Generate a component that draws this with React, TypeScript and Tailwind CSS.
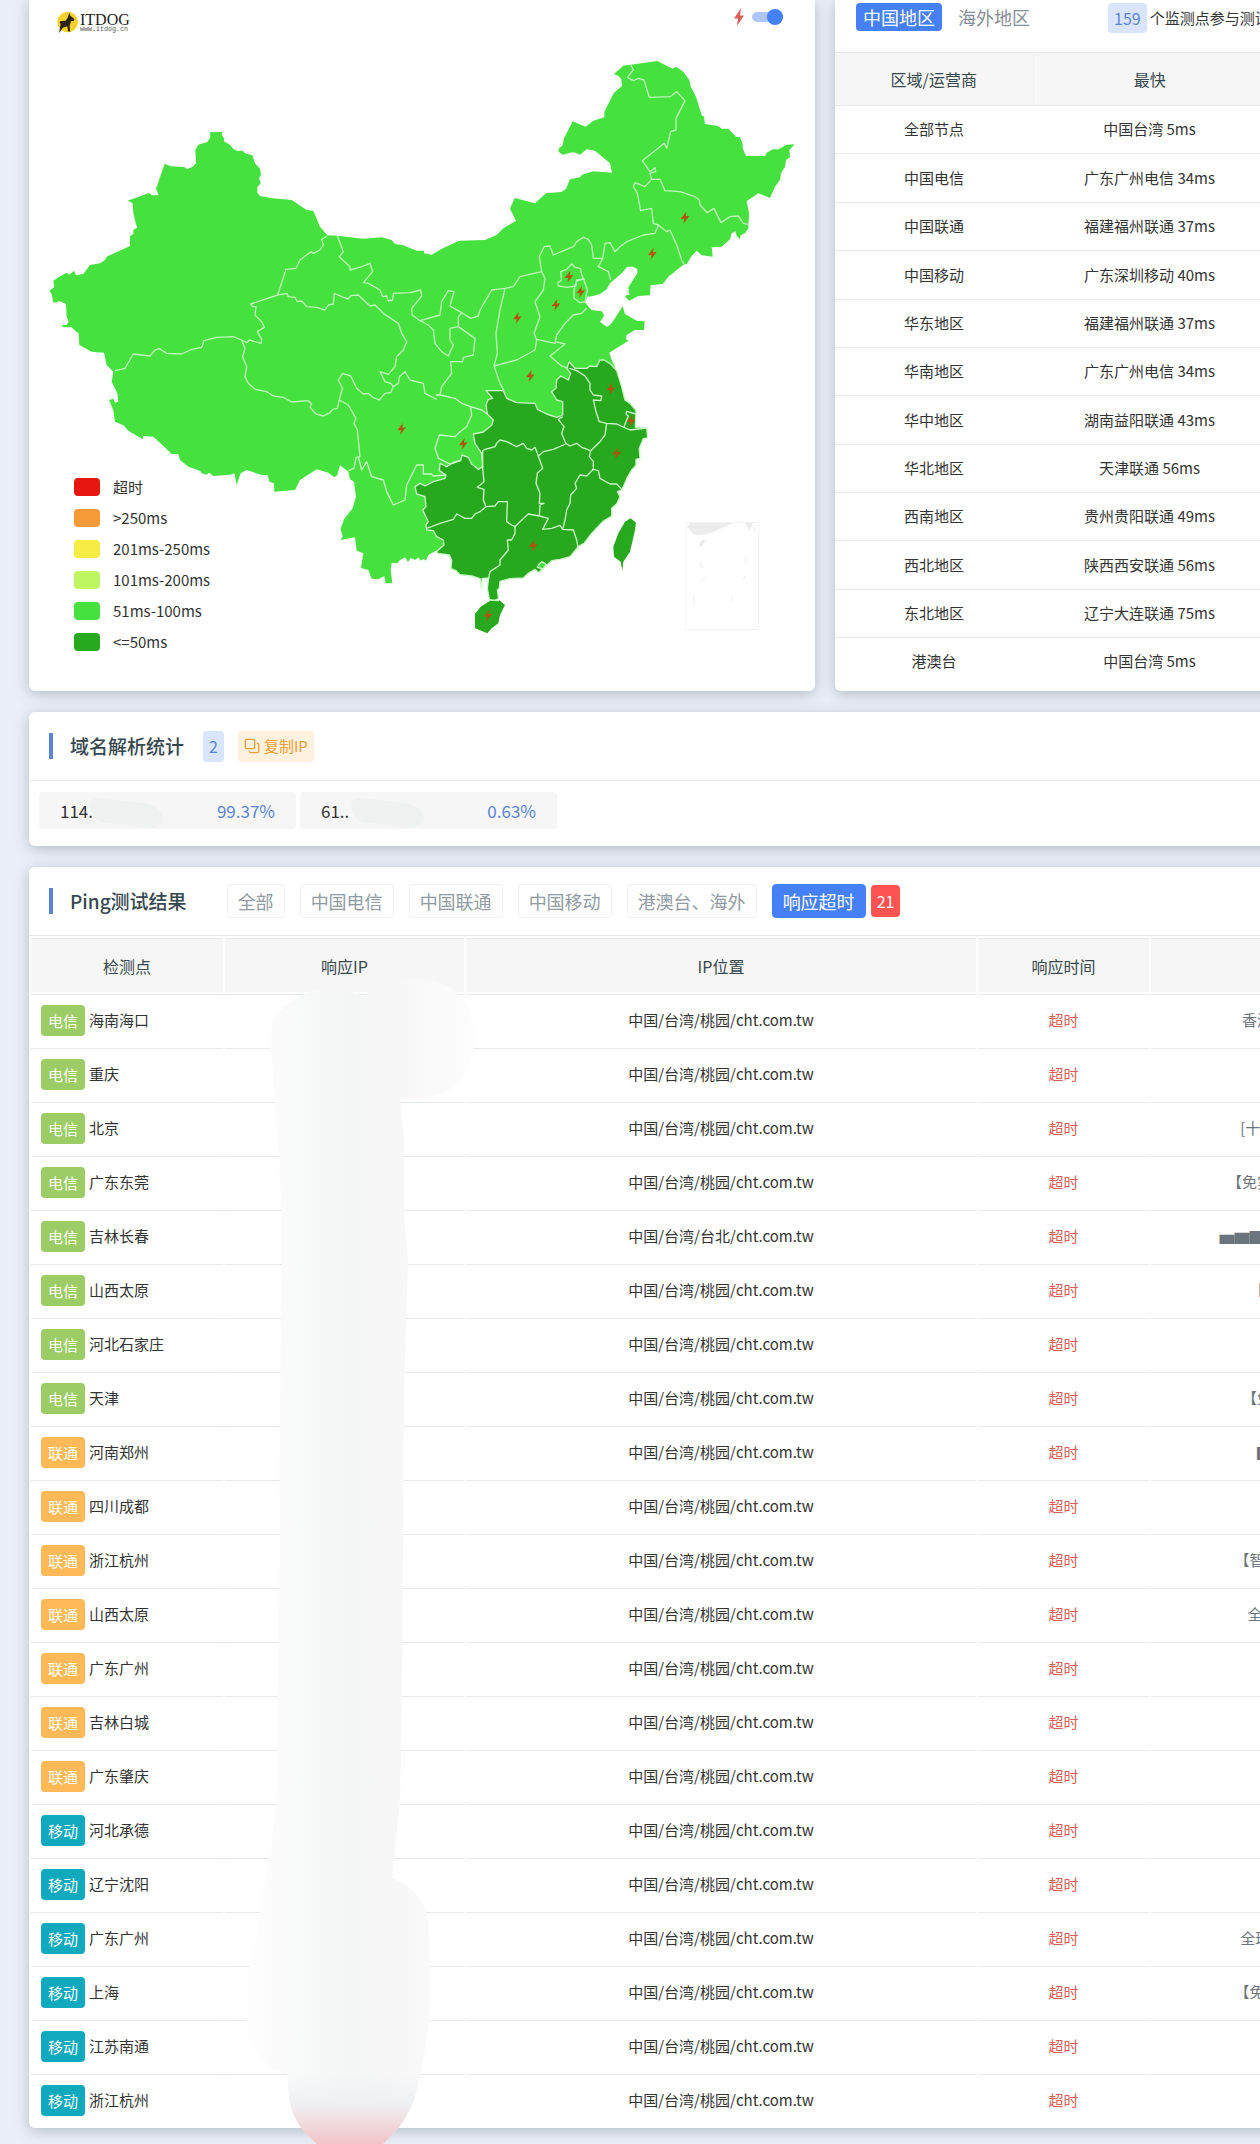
import { LuCopy } from "react-icons/lu";

const legend = [
    { label: "超时", color: "bg-[#e61610]" },
    { label: ">250ms", color: "bg-[#f79a38]" },
    { label: "201ms-250ms", color: "bg-[#f7ec44]" },
    { label: "101ms-200ms", color: "bg-[#bef663]" },
    { label: "51ms-100ms", color: "bg-[#46e03f]" },
    { label: "<=50ms", color: "bg-[#27a81f]" },
];

const regions = [
    { name: "全部节点", fastest: "中国台湾 5ms" },
    { name: "中国电信", fastest: "广东广州电信 34ms" },
    { name: "中国联通", fastest: "福建福州联通 37ms" },
    { name: "中国移动", fastest: "广东深圳移动 40ms" },
    { name: "华东地区", fastest: "福建福州联通 37ms" },
    { name: "华南地区", fastest: "广东广州电信 34ms" },
    { name: "华中地区", fastest: "湖南益阳联通 43ms" },
    { name: "华北地区", fastest: "天津联通 56ms" },
    { name: "西南地区", fastest: "贵州贵阳联通 49ms" },
    { name: "西北地区", fastest: "陕西西安联通 56ms" },
    { name: "东北地区", fastest: "辽宁大连联通 75ms" },
    { name: "港澳台", fastest: "中国台湾 5ms" },
];

const domainStats = [
    { ip: "114.", percent: "99.37%" },
    { ip: "61..", percent: "0.63%" },
];

const filters = ["全部", "中国电信", "中国联通", "中国移动", "港澳台、海外"];

const ispColors: Record<string, string> = {
    电信: "bg-[#9ccc65]",
    联通: "bg-[#ffba57]",
    移动: "bg-[#11a9bd]",
};

const results = [
    { isp: "电信", node: "海南海口", city: "桃园", sponsor: "香港云服务" },
    { isp: "电信", node: "重庆", city: "桃园", sponsor: "" },
    { isp: "电信", node: "北京", city: "桃园", sponsor: "[十年老店+]" },
    { isp: "电信", node: "广东东莞", city: "桃园", sponsor: "【免实名认证】" },
    { isp: "电信", node: "吉林长春", city: "台北", sponsor: "▅▆▇██▇▆▅" },
    { isp: "电信", node: "山西太原", city: "桃园", sponsor: "【推荐】" },
    { isp: "电信", node: "河北石家庄", city: "桃园", sponsor: "" },
    { isp: "电信", node: "天津", city: "桃园", sponsor: "【免备案】" },
    { isp: "联通", node: "河南郑州", city: "桃园", sponsor: "▇█▇" },
    { isp: "联通", node: "四川成都", city: "桃园", sponsor: "" },
    { isp: "联通", node: "浙江杭州", city: "桃园", sponsor: "【智能建站】" },
    { isp: "联通", node: "山西太原", city: "桃园", sponsor: "全网 CDN" },
    { isp: "联通", node: "广东广州", city: "桃园", sponsor: "" },
    { isp: "联通", node: "吉林白城", city: "桃园", sponsor: "" },
    { isp: "联通", node: "广东肇庆", city: "桃园", sponsor: "" },
    { isp: "移动", node: "河北承德", city: "桃园", sponsor: "" },
    { isp: "移动", node: "辽宁沈阳", city: "桃园", sponsor: "" },
    { isp: "移动", node: "广东广州", city: "桃园", sponsor: "全球节点5G" },
    { isp: "移动", node: "上海", city: "桃园", sponsor: "【免费试用】" },
    { isp: "移动", node: "江苏南通", city: "桃园", sponsor: "" },
    { isp: "移动", node: "浙江杭州", city: "桃园", sponsor: "" },
];

const mainland =
    "148,872 163,862 160,842 175,832 200,818 208,824 222,812 228,826 250,822 270,795 300,790 315,780 320,770 390,738 390,708 400,702 400,690 411,683 400,640 398,610 383,602 447,579 456,586 476,586 468,566 494,491 512,499 552,501 562,507 578,500 588,490 586,450 595,434 622,426 631,412 630,397 667,396 665,405 672,415 672,424 690,434 700,447 712,453 728,452 735,460 757,466 765,490 780,506 783,524 777,535 782,550 772,562 772,578 780,588 810,594 875,600 920,630 940,632 960,680 982,706 1012,707 1090,716 1145,712 1175,720 1185,732 1210,736 1250,752 1272,752 1272,760 1295,764 1330,744 1378,722 1455,720 1490,705 1510,685 1548,662 1530,626 1544,594 1605,610 1638,580 1684,576 1698,566 1710,538 1740,532 1746,524 1780,514 1836,518 1830,490 1785,452 1760,448 1740,464 1720,456 1688,464 1676,455 1676,445 1687,438 1692,415 1718,364 1757,380 1780,362 1813,352 1813,335 1842,278 1866,258 1864,238 1855,228 1842,222 1870,197 1972,183 2018,206 2028,200 2050,215 2068,240 2072,260 2088,290 2105,345 2112,350 2115,372 2155,378 2165,386 2185,386 2208,410 2220,412 2228,432 2228,445 2238,468 2295,468 2300,458 2318,448 2335,448 2360,434 2384,433 2368,450 2370,472 2358,480 2355,500 2343,520 2340,540 2325,560 2310,594 2275,580 2240,604 2247,640 2245,685 2235,700 2222,706 2220,718 2210,708 2206,694 2195,700 2190,718 2165,740 2135,742 2138,770 2105,766 2090,752 2075,768 2060,792 2050,794 2005,830 1988,852 1952,856 1950,886 1915,888 1888,902 1875,890 1880,885 1888,885 1885,862 1912,820 1912,808 1900,800 1882,800 1865,820 1830,850 1820,868 1800,882 1780,888 1762,890 1755,908 1775,930 1805,934 1812,945 1810,952 1800,965 1820,980 1830,975 1845,955 1868,918 1875,942 1910,962 1934,964 1932,990 1905,990 1880,1005 1878,1018 1886,1022 1865,1035 1828,1058 1836,1082 1850,1112 1865,1160 1875,1200 1890,1210 1908,1232 1906,1282 1940,1284 1943,1314 1930,1316 1918,1345 1920,1375 1908,1378 1908,1396 1895,1410 1882,1432 1870,1460 1865,1470 1852,1475 1860,1490 1850,1512 1835,1525 1835,1548 1808,1565 1775,1600 1752,1630 1737,1638 1725,1652 1710,1670 1680,1678 1655,1682 1630,1705 1615,1718 1605,1708 1585,1720 1570,1734 1530,1736 1500,1744 1498,1765 1492,1770 1496,1795 1480,1804 1468,1798 1462,1765 1466,1734 1446,1736 1445,1765 1440,1736 1415,1728 1380,1724 1368,1712 1353,1706 1355,1680 1348,1665 1312,1650 1285,1665 1278,1682 1270,1676 1262,1682 1255,1672 1245,1680 1232,1674 1224,1686 1215,1672 1200,1680 1192,1690 1175,1688 1172,1710 1177,1750 1157,1750 1153,1728 1135,1738 1115,1736 1105,1710 1083,1704 1090,1660 1070,1652 1065,1612 1022,1620 1028,1608 1022,1588 1032,1558 1058,1525 1068,1490 1062,1445 1050,1438 1045,1415 1020,1396 1012,1425 1003,1432 985,1418 950,1408 900,1440 885,1470 823,1475 822,1450 808,1445 803,1425 785,1425 740,1410 722,1420 710,1455 703,1420 690,1424 640,1428 628,1418 618,1424 605,1420 600,1412 565,1400 540,1380 535,1362 515,1362 490,1338 460,1310 430,1308 428,1318 385,1292 370,1276 345,1265 340,1230 327,1200 340,1196 345,1208 355,1205 352,1180 335,1145 340,1115 320,1095 312,1058 275,1055 238,1035 236,1000 225,992 215,982 190,982 185,975 200,975 206,965 200,950 198,912 180,904 160,908 155,882";

const south =
    "508,66 525,85 560,85 570,78 590,80 600,60 612,60 632,72 650,92 665,140 675,180 690,190 708,212 706,262 740,264 743,294 730,296 718,325 720,355 708,358 708,376 695,390 682,412 670,440 665,450 652,455 660,470 650,492 635,505 635,528 608,545 575,580 552,610 537,618 525,632 510,650 480,658 455,662 430,685 415,698 405,688 385,700 370,714 330,716 300,724 298,745 292,750 296,775 280,784 268,778 262,745 266,714 246,716 245,745 240,716 215,708 180,704 168,692 153,686 155,660 148,645 112,640 112,632 132,615 130,600 110,590 100,572 80,570 78,555 85,545 68,510 78,500 75,470 50,462 45,440 60,430 75,438 100,425 135,415 138,405 118,392 120,370 140,380 165,365 182,362 186,345 205,352 215,372 235,388 248,380 245,340 225,310 220,282 250,276 275,256 280,240 262,222 258,195 265,178 278,175 258,152 310,152 320,175 350,188 405,190 412,208 440,222 470,232 488,225 488,185 470,180 455,155 468,145 470,120 482,108 505,120 512,100 500,85";

// Province borders, western and northern half
const northBorders = [
    "345,1112 375,1105 400,1062 450,1068 465,1050 478,1046 500,1060 545,1062 575,1048 605,1042 612,1022 650,1012 700,1010 725,1020 740,1028 748,1020 783,1030 785,1018 772,995 793,982 785,965 765,945 768,920 758,920 752,912 833,885",
    "725,1020 735,1045 728,1070 740,1100 735,1130 745,1150 765,1168 800,1175 820,1188 850,1192 875,1206 925,1202 935,1212 930,1222 948,1242 970,1248 990,1238 998,1228 1012,1225 1018,1200",
    "1018,1200 1045,1215 1068,1255 1062,1270 1072,1290 1080,1370 1068,1372 1062,1405 1045,1412",
    "1018,1200 1027,1165 1015,1140 1028,1120 1052,1128 1070,1165 1090,1182 1105,1180 1118,1192 1138,1200 1155,1180 1172,1178 1180,1160 1195,1150 1198,1130 1215,1115 1230,1140 1270,1150 1275,1180 1310,1198",
    "833,885 860,880 865,890 885,892 892,905 905,903 920,920 950,922 975,930 985,915 1000,912 1003,880 1025,890 1045,897 1052,887 1075,885 1110,918 1125,915 1150,940 1195,970 1205,1000 1220,1025 1210,1050 1190,1070 1185,1100 1165,1123 1140,1115 1155,1145 1172,1150 1180,1160",
    "982,708 965,718 970,735 960,750 940,760 933,755 900,780 888,805 858,808 833,885",
    "1012,707 1030,755 1018,770 1050,800 1050,810 1085,800 1110,790 1118,815 1090,848 1105,850 1140,870 1148,890 1160,888 1165,903 1178,900 1180,880 1230,878 1262,870 1265,888 1235,925 1237,945 1260,962",
    "1260,962 1285,975 1300,990 1305,1030 1325,1055 1345,1068 1360,1035 1350,1020 1350,985 1375,980 1425,1015 1420,1065 1390,1072 1388,1085 1352,1085 1355,1120 1325,1160 1320,1185 1310,1186",
    "1260,962 1320,945 1325,905 1345,872 1362,875 1350,918 1385,938 1412,955 1435,948 1440,930 1475,870 1515,865 1540,860 1560,830 1625,815",
    "1375,980 1375,950 1385,940",
    "1515,865 1500,930 1488,1000 1492,1060 1482,1098 1500,1150 1512,1172",
    "1625,815 1635,835 1630,870 1605,905 1620,950 1602,1000 1610,1020 1605,1050 1550,1080 1482,1098",
    "1610,1018 1665,1030 1670,1005 1695,970 1720,945 1745,940 1760,925",
    "1665,1025 1695,1032 1650,1068 1685,1098 1705,1105",
    "1625,815 1618,770 1632,740 1650,738 1660,765 1720,740 1730,725 1750,712 1765,718 1775,735 1780,775 1808,775 1795,800 1825,815 1832,840",
    "1808,775 1815,730 1830,728 1845,755 1860,740 1880,725 1930,705 1965,700 1975,675 2000,695 2010,690 2030,735 2045,780 2052,792",
    "1975,675 1960,670 1955,625 1922,632 1912,580 1900,560 1905,548 1935,560 1955,538 1980,538 1995,572 2040,575 2085,590 2098,600 2100,615 2122,638 2142,625 2163,668 2190,650 2215,648 2230,670 2247,674",
    "1955,538 1950,520 1967,515 1965,503 1950,515 1927,482 1993,430 2000,445 2012,395 2028,390 2028,355 2055,302 2030,275 2010,290 1948,292 1932,240 1915,235 1900,242 1882,232 1900,210 1893,195",
    "1672,850 1685,840 1682,815 1700,808 1715,792 1725,802 1742,806 1745,825 1752,838 1730,840 1728,858 1700,862 1676,858 1672,850",
    "1728,845 1750,835 1762,870 1755,905 1740,908 1722,895 1722,870 1728,845",
];

// Province borders around the south-east
const southBorders = [
    "108,165 120,165 165,175 185,190 212,200 245,210 262,222",
    "212,200 215,225 200,260 180,275 165,290 118,285 105,325 115,355 150,372 182,362",
    "138,405 100,408 95,402 70,402 70,375 50,375 20,435 15,480 -20,495 -40,455 -50,420 -85,410 -100,365 -115,390 -125,350",
    "508,85 530,92 555,108 570,130 570,150 580,165 605,168 603,182 580,180 588,215 598,245 620,250 650,252 672,262 690,270 740,264",
    "672,260 685,228 678,222 680,214 708,222",
    "620,250 615,285 600,305 572,332",
    "488,230 475,238 492,260 485,280 497,310 510,318 530,310 545,322 572,332",
    "572,332 568,350 580,365 580,388 595,392 600,415 630,432 650,432 665,448",
    "580,388 560,408 540,405 525,430 530,445 512,465 510,490 500,510 495,540 488,568",
    "497,312 460,328 430,335 415,348 405,322 395,330 380,325 370,310 350,320 320,305 300,300 290,310 285,320 250,330",
    "415,348 428,385 412,400 408,430 420,460 418,490 432,490 420,495 418,528",
    "418,528 445,535 428,568 455,565 480,556 488,568 520,570 530,600 535,628",
    "418,528 385,522 360,545 345,560 335,555 320,545 322,485 295,485 285,498 258,500",
    "248,330 248,385 252,425 232,442 252,448 250,480 258,500",
    "258,500 240,515 225,522 215,535 195,535 170,522 160,538 120,550 80,565",
    "345,560 345,580 335,600 322,600 325,630 300,660 300,675 270,695 266,714",
    "272,780 298,782",
];

const bolts = [
    [1707, 830], [1742, 876], [1668, 915], [1552, 954], [1957, 761],
    [2055, 653], [1591, 1128], [1833, 1167], [1893, 1263], [1850, 1360],
    [1390, 1332], [1205, 1287], [1600, 1637], [1464, 1846],
];

const card = "bg-white shadow-[0_3px_14px_rgba(90,110,115,0.38)]";

function ChinaMap () {
    return (
        <svg viewBox="87 0 2358 2073" className="block w-full" role="img" aria-label="ITDOG">
            <circle cx="203" cy="66" r="31" fill="#f6d12c" />
            <path
                d="M208 38l3 9 12 10-1 5-9 2-4 14 1 17-6-1-2-15-14 4-6 9-5 7 4-22 1-6-3-2 1-5 17-2 6-9z"
                fill="#2b2311"
            />
            <text x="240" y="76" fontSize="48" fontFamily="Liberation Serif, serif" fill="#222">ITDOG</text>
            <text x="240" y="92" fontSize="20" fontFamily="Liberation Mono, monospace" fill="#555">www.itdog.cn</text>

            <polygon points={mainland} fill="#46e03f" />
            <g transform="translate(1200 1020)" stroke="#c9f7c5" strokeWidth="4" strokeLinejoin="round">
                <polygon points={south} fill="#27a81f" />
                <polygon points="225,822 242,800 270,782 298,780 315,795 300,825 295,850 275,865 262,880 225,865" fill="#27a81f" stroke="none" />
                <polygon points="692,535 708,548 704,575 690,635 670,665 667,692 662,665 642,650 640,620 655,580 675,545" fill="#27a81f" stroke="none" />
                <polygon points="412,682 415,675 425,665 438,672 430,687" fill="#46e03f" />
                {southBorders.map((points) => <polyline key={points} points={points} fill="none" />)}
            </g>
            {northBorders.map((points) => (
                <polyline key={points} points={points} fill="none" stroke="#bdf5b9" strokeWidth="4" strokeLinejoin="round" />
            ))}
            {bolts.map(([x, y]) => (
                <path key={`${x}-${y}`} transform={`translate(${x} ${y})`} d="M4-18-13 4-2 3-5 18 13-5 2-4z" fill="#b4530f" />
            ))}

            <g transform="translate(1200 1020)" fill="#ececec">
                <rect x="858" y="548" width="218" height="320" fill="none" stroke="#f4f4f4" strokeWidth="3" />
                <path d="M860 560l12-12h128l-60 28-35 9h-22zM1035 548h23l-8 24zM895 620l8-18 14-2-8 16z" />
                <path d="M900 665l5 18M903 726l12-14M880 770l3 20M1036 650v20M1028 720l10-14M990 786l10-16M1062 575l5-12" stroke="#ececec" strokeWidth="3" />
            </g>
        </svg>
    )
}

function SectionTitle ({ title }: { title: string }) {
    return (
        <div className="flex items-center">
            <span className="mr-[17px] h-[26px] w-1 bg-[#5a85d6]" />
            <h2 className="text-[19px] leading-7 font-medium text-[#37474f]">{title}</h2>
        </div>
    )
}

export default function App () {
    return (
        <div className="overflow-hidden bg-[#eaeef8] pb-4 pl-[29px] font-['Noto_Sans_CJK_SC',sans-serif] text-[15px] text-[#333]">
            <main className="flex min-w-[1381px] flex-col gap-[21px]">
                <div className="grid grid-cols-[786fr_575fr] gap-5">
                    <section className={`relative rounded-b-md ${card}`}>
                        <ChinaMap />
                        <label className="absolute top-2 right-8 flex items-center gap-2">
                            <svg viewBox="0 0 10 18" className="h-[18px] w-2.5" aria-hidden="true">
                                <path d="M7 0L0 10.500h4L3 18l7-10.500H6z" fill="#d9605a" />
                            </svg>
                            <input
                                type="checkbox"
                                defaultChecked
                                aria-label="闪电"
                                className="relative h-2.5 w-[31px] appearance-none rounded-full bg-[#adc5fb] before:absolute before:-top-[3px] before:right-0 before:size-4 before:rounded-full before:bg-[#4680f7]"
                            />
                        </label>
                        <ul className="absolute bottom-[37px] left-[45px] flex flex-col gap-[7px]">
                            {legend.map((item) => (
                                <li key={item.label} className="flex items-center gap-[13px] leading-6">
                                    <span className={`h-[18px] w-[26px] rounded ${item.color}`} />
                                    {item.label}
                                </li>
                            ))}
                        </ul>
                    </section>

                    <section className={`rounded-b-md ${card}`}>
                        <div className="flex h-[52px] items-start px-[21px] pt-[3px]">
                            <button className="h-7 rounded bg-[#4680f7] px-[7px] text-lg leading-7 text-white">中国地区</button>
                            <button className="ml-[9px] h-7 px-[7px] text-lg leading-7 text-[#868e96]">海外地区</button>
                            <span className="ml-[71px] h-[30px] rounded bg-[#d9e5fd] px-1.5 text-base leading-[30px] text-[#5a85d6]">159</span>
                            <span className="ml-[3px] leading-[30px]">个监测点参与测试</span>
                        </div>
                        <table className="h-[633px] w-[431px] table-fixed border-collapse text-center">
                            <thead>
                                <tr className="h-[53px] border-y border-[#e6eaed] bg-[#f6f6f6] text-base text-[#37474f]">
                                    <th className="w-[198px] border-r border-r-[#f1f1f1] font-normal">区域/运营商</th>
                                    <th className="font-normal">最快</th>
                                </tr>
                            </thead>
                            <tbody>
                                {regions.map((item) => (
                                    <tr key={item.name} className="border-b border-[#e9edf0] last:border-b-0">
                                        <td>{item.name}</td>
                                        <td>{item.fastest}</td>
                                    </tr>
                                ))}
                            </tbody>
                        </table>
                    </section>
                </div>

                <section className={`rounded-md ${card}`}>
                    <div className="flex h-[69px] items-center border-b border-[#e6eaed] px-5">
                        <SectionTitle title="域名解析统计" />
                        <span className="ml-[19px] rounded bg-[#d9e5fd] px-1.5 text-base leading-[31px] text-[#5a85d6]">2</span>
                        <button className="ml-3.5 flex h-[31px] items-center gap-1 rounded bg-[#fff1dd] px-1.5 text-[#eba035]">
                            <LuCopy className="size-4 -scale-100" />
                            复制IP
                        </button>
                    </div>
                    <div className="flex gap-1 px-2.5 pt-[11px] pb-[17px] text-[17px]">
                        {domainStats.map((item) => (
                            <div key={item.ip} className="relative flex h-[37px] w-[257px] items-center justify-between rounded-sm bg-[#f6f6f6] px-[21px]">
                                <span>{item.ip}</span>
                                <svg viewBox="0 0 74 34" className="absolute top-1 left-[50px] w-[74px]" aria-hidden="true">
                                    <path d="M1 10Q2 0 14 2L60 8Q76 14 74 25 70 34 54 31L12 26Q2 22 1 10z" fill="#f0f1f1" />
                                </svg>
                                <span className="text-[#5a85d6]">{item.percent}</span>
                            </div>
                        ))}
                    </div>
                </section>

                <section className={`relative rounded-md ${card}`}>
                    <div className="flex h-[69px] items-center border-b border-[#e6eaed] px-5">
                        <SectionTitle title="Ping测试结果" />
                        <div className="ml-10 flex gap-[15px] text-lg">
                            {filters.map((label) => (
                                <button key={label} className="h-[34px] rounded-sm border border-[#eef0f1] px-2.5 leading-8 text-[#909ba3]">
                                    {label}
                                </button>
                            ))}
                            <button className="h-[34px] rounded-sm border border-[#4680f7] bg-[#4680f7] px-2.5 leading-8 text-white">响应超时</button>
                        </div>
                        <span className="ml-[5px] rounded bg-[#ff5252] px-1.5 text-base leading-8 text-white">21</span>
                    </div>
                    <table className="w-full table-fixed border-separate border-spacing-[2px] text-center">
                        <thead>
                            <tr className="h-[54px] text-base text-[#37474f]">
                                <th className="w-[192px] border-t border-[#e9edf0] bg-[#f6f6f6] font-normal">检测点</th>
                                <th className="w-[239px] border-t border-[#e9edf0] bg-[#f6f6f6] font-normal">响应IP</th>
                                <th className="w-[510px] border-t border-[#e9edf0] bg-[#f6f6f6] font-normal">IP位置</th>
                                <th className="w-[171px] border-t border-[#e9edf0] bg-[#f6f6f6] font-normal">响应时间</th>
                                <th className="border-t border-[#e9edf0] bg-[#f6f6f6] font-normal"></th>
                            </tr>
                        </thead>
                        <tbody>
                            {results.map((item) => (
                                <tr key={item.isp + item.node} className="h-[52px]">
                                    <td className="border-t border-[#e4e9ec] pl-2.5 text-left">
                                        <div className="flex items-center gap-1">
                                            <span className={`h-[31px] w-11 rounded text-center leading-[31px] text-white ${ispColors[item.isp]}`}>{item.isp}</span>
                                            {item.node}
                                        </div>
                                    </td>
                                    <td className="border-t border-[#e4e9ec]"></td>
                                    <td className="border-t border-[#e4e9ec]">中国/台湾/{item.city}/cht.com.tw</td>
                                    <td className="border-t border-[#e4e9ec] text-[#d9605a]">超时</td>
                                    <td className="border-t border-[#e4e9ec] whitespace-nowrap text-[#6c757d]">{item.sponsor}</td>
                                </tr>
                            ))}
                        </tbody>
                    </table>

                    {/* mask over the resolved addresses */}
                    <svg viewBox="240 978 240 1166" className="absolute top-[111px] left-[211px] w-60" aria-hidden="true">
                        <defs>
                            <linearGradient id="mask" x1="0" x2="1" y1="0" y2="0">
                                <stop offset="0" stopColor="#fefefe" />
                                <stop offset="0.45" stopColor="#f4f5f5" />
                                <stop offset="0.62" stopColor="#f6f6f6" />
                                <stop offset="1" stopColor="#fdfdfd" />
                            </linearGradient>
                            <linearGradient id="glow" x1="0" x2="0" y1="0" y2="1">
                                <stop offset="0.94" stopColor="#eef2f5" stopOpacity="0" />
                                <stop offset="0.965" stopColor="#eef1f3" />
                                <stop offset="1" stopColor="#f2c4c8" />
                            </linearGradient>
                        </defs>
                        {["url(#mask)", "url(#glow)"].map((fill) => (
                            <path
                                key={fill}
                                fill={fill}
                                d="M269 1040Q270 1020 283 1008 305 988 328 989 350 989 363 997 385 978 417 978 450 980 465 1002 478 1025 473 1050 466 1095 420 1098L400 1099 404 1140 404 1213 408 1260 404 1400 402 1700 400 1800 392 1878Q429 1892 429 1933L430 2000Q427 2060 413 2103 402 2128 383 2144L317 2144Q285 2120 288 2075 248 2062 245 2013 246 1970 255 1943L270 1850 277 1800 278 1700 280 1400 282 1227 279 1160 272 1060z"
                            />
                        ))}
                    </svg>
                </section>
            </main>
        </div>
    )
}
